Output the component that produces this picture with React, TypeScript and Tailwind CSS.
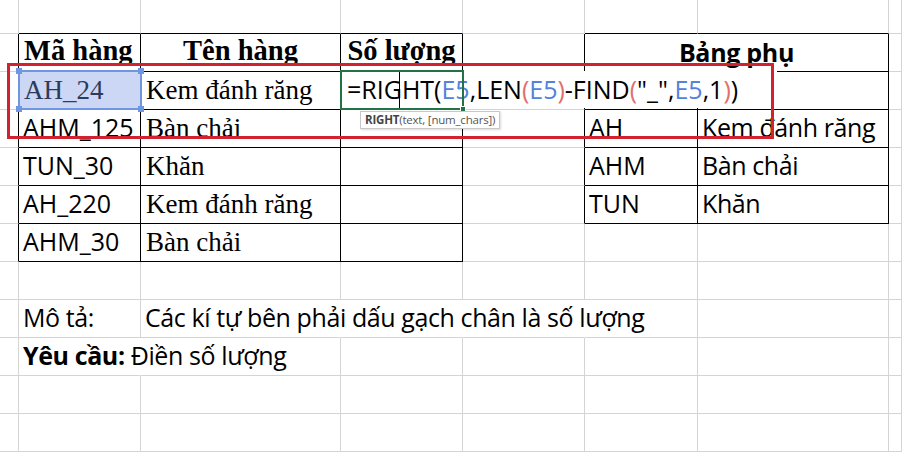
import React from 'react';

const COLW = ['w-[19px]', 'w-[122px]', 'w-[200px]', 'w-[122px]', 'w-[122px]', 'w-[113px]', 'w-[191px]', 'w-[13px]'];
const ROWS = [0, 1, 2, 3, 4, 5, 6, 7, 8, 9, 10, 11];

const inTable = (r: number, c: number) =>
  (r >= 1 && r <= 6 && c >= 1 && c <= 3) || (r >= 1 && r <= 5 && (c === 5 || c === 6));

const SERIF = "font-['Liberation_Serif',serif] text-[27px] leading-none pl-[5px] pb-[5px] text-black";
const SERIF_B = "font-['Liberation_Serif',serif] font-bold text-[28.5px] leading-none pb-[6px] text-black";
const SANS = "font-['Open_Sans',sans-serif] text-[25px] leading-none pl-[4px] pb-[7px] text-black";
const SANS_L = "font-['Open_Sans',sans-serif] text-[25px] tracking-[-0.4px] leading-none pl-[4px] pb-[7px] text-black";
const SANS_B = "font-['Open_Sans',sans-serif] font-bold text-[25px] tracking-[-0.3px] leading-none pb-[6px] text-black";

type Cell = { node: React.ReactNode; cls: string };

const content: Record<string, Cell> = {
  '1-1': { node: 'Mã hàng', cls: SERIF_B + ' pl-[5px]' },
  '1-2': { node: 'Tên hàng', cls: SERIF_B + ' justify-center' },
  '1-3': { node: 'Số lượng', cls: SERIF_B + ' justify-center' },
  '1-5': { node: 'Bảng phụ', cls: SANS_B + ' justify-center' },
  '2-1': { node: 'AH_24', cls: SERIF + ' !text-[#2d3a5c]' },
  '2-2': { node: 'Kem đánh răng', cls: SERIF },
  '3-1': { node: 'AHM_125', cls: SANS },
  '3-2': { node: 'Bàn chải', cls: SERIF },
  '3-5': { node: 'AH', cls: SANS },
  '3-6': { node: 'Kem đánh răng', cls: SANS_L },
  '4-1': { node: 'TUN_30', cls: SANS },
  '4-2': { node: 'Khăn', cls: SERIF },
  '4-5': { node: 'AHM', cls: SANS },
  '4-6': { node: 'Bàn chải', cls: SANS_L },
  '5-1': { node: 'AH_220', cls: SANS },
  '5-2': { node: 'Kem đánh răng', cls: SERIF },
  '5-5': { node: 'TUN', cls: SANS },
  '5-6': { node: 'Khăn', cls: SANS_L },
  '6-1': { node: 'AHM_30', cls: SANS },
  '6-2': { node: 'Bàn chải', cls: SERIF },
  '8-1': { node: 'Mô tả:', cls: SANS_L },
  '8-2': { node: 'Các kí tự bên phải dấu gạch chân là số lượng', cls: SANS_L },
  '9-1': {
    node: (
      <>
        <span className="font-bold">Yêu cầu:</span> Điền số lượng
      </>
    ),
    cls: SANS_L,
  },
};

const hiddenRight = new Set(['8-2', '8-3', '8-4', '9-1']);

function GridCell({ r, c, merged }: { r: number; c: number; merged?: boolean }) {
  const key = `${r}-${c}`;
  const lastCol = merged ? 6 : c;
  const rightBlack = inTable(r, lastCol) || inTable(r, lastCol + 1);
  const bottomBlack = inTable(r, c) || inTable(r + 1, c);
  const rightCls = rightBlack
    ? 'border-r-black'
    : hiddenRight.has(key)
    ? 'border-r-transparent'
    : 'border-r-[#d4d4d4]';
  const bottomCls = bottomBlack ? 'border-b-black' : 'border-b-[#d4d4d4]';
  const widthCls = merged ? 'w-[304px]' : COLW[c];
  const selected = r === 2 && c === 1;
  const cell = content[key];
  return (
    <div
      className={`flex items-end shrink-0 h-full border-r border-b whitespace-nowrap ${widthCls} ${rightCls} ${bottomCls} ${
        selected ? 'bg-[#cbd7f4]' : ''
      } ${cell ? cell.cls : ''}`}
    >
      {cell ? <span>{cell.node}</span> : null}
    </div>
  );
}

function Row({ r }: { r: number }) {
  const h = r === 0 ? 'h-[34px]' : 'h-[38px]';
  const cols = [0, 1, 2, 3, 4, 5, 6, 7];
  return (
    <div className={`flex ${h}`}>
      {cols.map((c) => {
        if (r === 1 && c === 6) return null;
        return <GridCell key={c} r={r} c={c} merged={r === 1 && c === 5} />;
      })}
    </div>
  );
}

const BLUE = 'text-[#5282dc]';
const RED = 'text-[#e0706e]';

export default function App() {
  return (
    <div className="relative w-[902px] h-[453px] overflow-hidden bg-white">
      <div className="flex flex-col">
        {ROWS.map((r) => (
          <Row key={r} r={r} />
        ))}
      </div>

      {/* selection of AH_24 */}
      <div className="absolute left-[18px] top-[70px] w-[124px] h-[40px] border-2 border-[#7096e2]">
        <div className="absolute -left-[4px] -top-[4px] w-[6px] h-[6px] bg-[#7096e2]" />
        <div className="absolute -right-[4px] -top-[4px] w-[6px] h-[6px] bg-[#7096e2]" />
        <div className="absolute -left-[4px] -bottom-[4px] w-[6px] h-[6px] bg-[#7096e2]" />
        <div className="absolute -right-[4px] -bottom-[4px] w-[6px] h-[6px] bg-[#7096e2]" />
      </div>

      {/* formula editor overflow */}
      <div className="absolute left-[341px] top-[71px] w-[436px] h-[37px] bg-white flex items-end pl-[6px] pb-[6px] whitespace-nowrap font-['Open_Sans',sans-serif] text-[25px] leading-none text-black">
        <span>=RIGHT(</span>
        <span className={BLUE}>E5</span>
        <span>,LEN</span>
        <span className={RED}>(</span>
        <span className={BLUE}>E5</span>
        <span className={RED}>)</span>
        <span>-FIND</span>
        <span className={RED}>(</span>
        <span>"_",</span>
        <span className={BLUE}>E5</span>
        <span>,1</span>
        <span className={RED}>)</span>
        <span>)</span>
      </div>
      {/* cursor */}
      <div className="absolute left-[399px] top-[71px] w-px h-[38px] bg-black" />

      {/* active cell border */}
      <div className="absolute left-[340px] top-[70px] w-[124px] h-[40px] border-2 border-[#217346]">
        <div className="absolute -right-[4px] -bottom-[4px] w-[6px] h-[6px] bg-[#217346] border border-white" />
      </div>

      {/* tooltip */}
      <div className="absolute left-[360px] top-[111px] h-[18px] px-[4px] flex items-center bg-white border border-[#c8c8c8] shadow-[1px_1px_2px_rgba(0,0,0,0.15)] font-['Open_Sans',sans-serif] text-[11.5px] tracking-[-0.2px] leading-none text-[#555] whitespace-nowrap">
        <span className="font-bold text-[#444]">RIGHT</span>
        <span>(text, [num_chars])</span>
      </div>

      {/* red highlight box */}
      <div className="absolute left-[7px] top-[63px] w-[767px] h-[76px] border-[3px] border-[#d3222f] pointer-events-none" />
    </div>
  );
}
